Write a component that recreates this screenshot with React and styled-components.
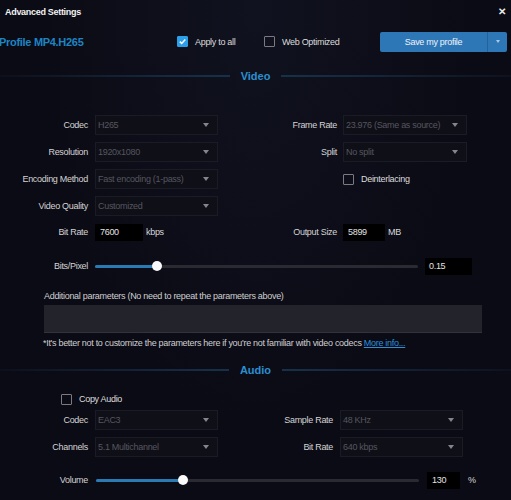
import React from "react";
import styled, { createGlobalStyle } from "styled-components";

const Global = createGlobalStyle`
  html, body { margin: 0; padding: 0; background: #0b0b15; }
  body {
    font-family: "Liberation Sans", Arial, sans-serif;
    font-size: 9px;
    letter-spacing: -0.3px;
    color: #d6d6d6;
  }
  * { box-sizing: border-box; }
`;

const Page = styled.div`
  width: 511px;
  height: 500px;
  overflow: hidden;
  background: radial-gradient(ellipse at 50% 0%, #10121f 0%, #0b0b15 60%);
`;

const TitleBar = styled.div`
  height: 23px;
  display: flex;
  align-items: center;
  justify-content: space-between;
  padding: 0 5px 0 5px;
  font-weight: bold;
  color: #f2f2f2;
`;

const Close = styled.span`
  font-size: 10px;
  font-weight: bold;
  color: #e8e8e8;
`;

const ProfileRow = styled.div`
  height: 21px;
  margin-top: 8px;
  display: flex;
  align-items: center;
`;

const ProfileName = styled.div`
  font-size: 11px;
  font-weight: bold;
  letter-spacing: -0.3px;
  color: #1d85c4;
  width: 178px;
  margin-left: -1px;
`;

const CheckWrap = styled.label`
  display: flex;
  align-items: center;
  gap: 7px;
  color: #dcdcdc;
  width: ${(p) => p.$w || "auto"};
`;

const Box = styled.span`
  width: 11px;
  height: 11px;
  border-radius: 1px;
  display: inline-flex;
  align-items: center;
  justify-content: center;
  background: ${(p) => (p.$on ? "#2b9fe8" : "transparent")};
  border: 1px solid ${(p) => (p.$on ? "#2b9fe8" : "#7a7a80")};
`;

const SaveButton = styled.div`
  margin-left: auto;
  margin-right: 4px;
  width: 127px;
  height: 20px;
  display: flex;
  border-radius: 2px;
  background: #2e77b6;
  color: #eef4fa;
  overflow: hidden;
`;

const SaveLabel = styled.div`
  flex: 1;
  display: flex;
  align-items: center;
  justify-content: center;
  border-right: 1px solid #24629a;
`;

const SaveArrow = styled.div`
  width: 19px;
  display: flex;
  align-items: center;
  justify-content: center;
`;

const SmallCaret = styled.span`
  width: 0;
  height: 0;
  border-left: 2.5px solid transparent;
  border-right: 2.5px solid transparent;
  border-top: 3px solid #a9c8e6;
`;

const SectionHeader = styled.div`
  display: flex;
  align-items: center;
  gap: 11px;
  height: 14px;
  margin-top: ${(p) => p.$mt || "0"};
  font-size: 11px;
  font-weight: bold;
  letter-spacing: 0;
  color: #2a8fd0;
`;

const Rule = styled.div`
  flex: 1;
  height: 2px;
  background: ${(p) =>
    p.$left
      ? "linear-gradient(90deg, rgba(30,60,90,0.1), #17314a)"
      : "linear-gradient(90deg, #17314a, rgba(30,60,90,0.15))"};
`;

const TwoCols = styled.div`
  display: grid;
  grid-template-columns: ${(p) => p.$cols || "250px 261px"};
  margin-top: ${(p) => p.$mt || "0"};
`;

const Column = styled.div`
  display: flex;
  flex-direction: column;
  gap: 7px;
`;

const Field = styled.div`
  display: grid;
  grid-template-columns: ${(p) => p.$label}px ${(p) => p.$ctrl}px auto;
  column-gap: ${(p) => p.$gap || 7}px;
  align-items: center;
  height: ${(p) => p.$h || 20}px;
`;

const Label = styled.span`
  text-align: right;
  color: #d4d4d4;
  white-space: nowrap;
`;

const Select = styled.div`
  height: 20px;
  display: flex;
  align-items: center;
  justify-content: space-between;
  padding: 0 8px 0 2px;
  background: #0f0f18;
  border: 1px solid #1b1b25;
  color: #56565f;
  white-space: nowrap;
`;

const Caret = styled.span`
  width: 0;
  height: 0;
  border-left: 3px solid transparent;
  border-right: 3px solid transparent;
  border-top: 4px solid #85858c;
`;

const NumInput = styled.div`
  width: ${(p) => p.$w}px;
  height: 17px;
  background: #000;
  color: #e2e2e2;
  display: flex;
  align-items: center;
  padding-left: ${(p) => p.$pl || 5}px;
`;

const InputWithUnit = styled.div`
  display: flex;
  align-items: center;
  gap: 3px;
`;

const Unit = styled.span`
  color: #d8d8d8;
`;

const SliderRow = styled.div`
  display: grid;
  grid-template-columns: 88px ${(p) => p.$track}px ${(p) => p.$box}px auto;
  column-gap: ${(p) => p.$gap || 7}px;
  align-items: center;
  height: 18px;
  margin-top: ${(p) => p.$mt || "0"};
`;

const Track = styled.div`
  position: relative;
  height: 3px;
  background: #2a2a33;
  border-radius: 2px;
`;

const Fill = styled.div`
  height: 3px;
  background: #2a7ab3;
  border-radius: 2px;
`;

const Thumb = styled.div`
  position: absolute;
  top: 50%;
  width: 10px;
  height: 10px;
  margin: -5px 0 0 -5px;
  border-radius: 50%;
  background: #fafafa;
`;

const Params = styled.div`
  padding-left: 44px;
  margin-top: ${(p) => p.$mt || "0"};
`;

const ParamsTitle = styled.div`
  color: #cfcfcf;
  height: 12px;
  line-height: 12px;
`;

const ParamsArea = styled.div`
  width: 438px;
  height: 28px;
  margin-top: 3px;
  background: #23232b;
  border-bottom: 1px solid #33333c;
`;

const Note = styled.div`
  margin-top: 4px;
  margin-left: -1px;
  color: #cfcfcf;
  height: 12px;
  line-height: 12px;
`;

const Link = styled.a`
  color: #2d8fd8;
  text-decoration: underline;
`;

const CheckRow = styled.div`
  height: 14px;
  display: flex;
  align-items: center;
  padding-left: ${(p) => p.$pl}px;
  margin-top: ${(p) => p.$mt || "0"};
`;

function Check({ on }) {
  return (
    <Box $on={on}>
      {on && (
        <svg width="9" height="9" viewBox="0 0 9 9">
          <path d="M1.8 4.6 L3.7 6.4 L7.3 2.6" fill="none" stroke="#fff" strokeWidth="1.5" />
        </svg>
      )}
    </Box>
  );
}

function Dropdown({ value }) {
  return (
    <Select>
      <span>{value}</span>
      <Caret />
    </Select>
  );
}

function Slider({ pct }) {
  return (
    <Track>
      <Fill style={{ width: `${pct}%` }} />
      <Thumb style={{ left: `${pct}%` }} />
    </Track>
  );
}

export default function App() {
  return (
    <Page>
      <Global />
      <TitleBar>
        <span>Advanced Settings</span>
        <Close>✕</Close>
      </TitleBar>

      <ProfileRow>
        <ProfileName>Profile MP4.H265</ProfileName>
        <CheckWrap $w="87px">
          <Check on />
          Apply to all
        </CheckWrap>
        <CheckWrap>
          <Check />
          Web Optimized
        </CheckWrap>
        <SaveButton>
          <SaveLabel>Save my profile</SaveLabel>
          <SaveArrow>
            <SmallCaret />
          </SaveArrow>
        </SaveButton>
      </ProfileRow>

      <SectionHeader $mt="17px">
        <Rule $left />
        Video
        <Rule />
      </SectionHeader>

      <TwoCols $mt="32px">
        <Column>
          <Field $label={88} $ctrl={123}>
            <Label>Codec</Label>
            <Dropdown value="H265" />
          </Field>
          <Field $label={88} $ctrl={123}>
            <Label>Resolution</Label>
            <Dropdown value="1920x1080" />
          </Field>
          <Field $label={88} $ctrl={123}>
            <Label>Encoding Method</Label>
            <Dropdown value="Fast encoding (1-pass)" />
          </Field>
          <Field $label={88} $ctrl={123}>
            <Label>Video Quality</Label>
            <Dropdown value="Customized" />
          </Field>
          <Field $label={88} $ctrl={123} $h={18}>
            <Label>Bit Rate</Label>
            <InputWithUnit>
              <NumInput $w={48}>7600</NumInput>
              <Unit>kbps</Unit>
            </InputWithUnit>
          </Field>
        </Column>
        <Column>
          <Field $label={87} $ctrl={124} $gap={6}>
            <Label>Frame Rate</Label>
            <Dropdown value="23.976 (Same as source)" />
          </Field>
          <Field $label={87} $ctrl={124} $gap={6}>
            <Label>Split</Label>
            <Dropdown value="No split" />
          </Field>
          <Field $label={87} $ctrl={124} $gap={6}>
            <span />
            <CheckWrap>
              <Check />
              Deinterlacing
            </CheckWrap>
          </Field>
          <Field $label={87} $ctrl={124} $gap={6}>
            <span />
            <span />
          </Field>
          <Field $label={87} $ctrl={124} $gap={6} $h={18}>
            <Label>Output Size</Label>
            <InputWithUnit>
              <NumInput $w={42}>5899</NumInput>
              <Unit>MB</Unit>
            </InputWithUnit>
          </Field>
        </Column>
      </TwoCols>

      <SliderRow $track={323} $box={47} $mt="16px">
        <Label>Bits/Pixel</Label>
        <Slider pct={19.2} />
        <NumInput $w={47} $pl={4}>0.15</NumInput>
      </SliderRow>

      <Params $mt="15px">
        <ParamsTitle>Additional parameters (No need to repeat the parameters above)</ParamsTitle>
        <ParamsArea />
        <Note>
          *It's better not to customize the parameters here if you're not familiar with video codecs{" "}
          <Link>More info...</Link>
        </Note>
      </Params>

      <SectionHeader $mt="14px">
        <Rule $left />
        Audio
        <Rule />
      </SectionHeader>

      <CheckRow $pl={61} $mt="15px">
        <CheckWrap>
          <Check />
          Copy Audio
        </CheckWrap>
      </CheckRow>

      <TwoCols $mt="4px" $cols="246px 265px">
        <Column>
          <Field $label={88} $ctrl={123}>
            <Label>Codec</Label>
            <Dropdown value="EAC3" />
          </Field>
          <Field $label={88} $ctrl={123}>
            <Label>Channels</Label>
            <Dropdown value="5.1 Multichannel" />
          </Field>
        </Column>
        <Column>
          <Field $label={87} $ctrl={123}>
            <Label>Sample Rate</Label>
            <Dropdown value="48 KHz" />
          </Field>
          <Field $label={87} $ctrl={123}>
            <Label>Bit Rate</Label>
            <Dropdown value="640 kbps" />
          </Field>
        </Column>
      </TwoCols>

      <SliderRow $track={323} $box={33} $gap={8} $mt="14px">
        <Label>Volume</Label>
        <Slider pct={26.9} />
        <NumInput $w={33} $pl={5}>130</NumInput>
        <Unit>%</Unit>
      </SliderRow>
    </Page>
  );
}
